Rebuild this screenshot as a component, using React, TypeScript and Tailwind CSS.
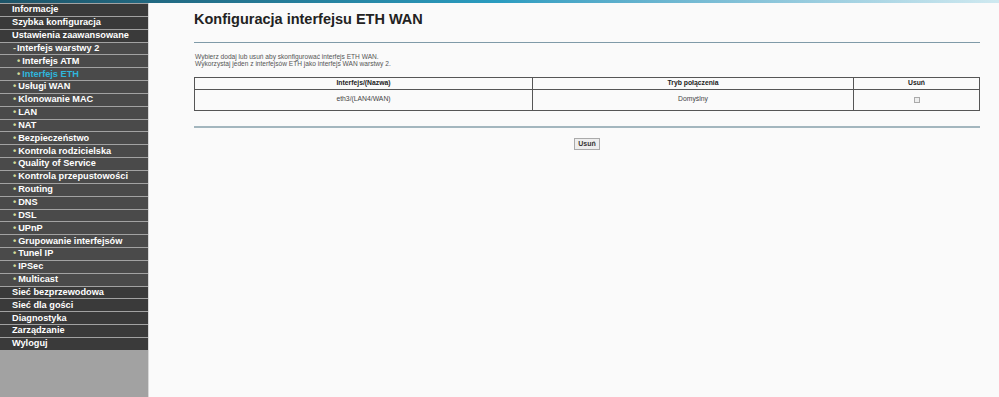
import React from 'react'

type Item = { label: string; level: 1 | 2 | 3; mark?: string; active?: boolean }

const menu: Item[] = [
  { label: 'Informacje', level: 1 },
  { label: 'Szybka konfiguracja', level: 1 },
  { label: 'Ustawienia zaawansowane', level: 1 },
  { label: 'Interfejs warstwy 2', level: 2, mark: '-' },
  { label: 'Interfejs ATM', level: 3 },
  { label: 'Interfejs ETH', level: 3, active: true },
  { label: 'Usługi WAN', level: 2 },
  { label: 'Klonowanie MAC', level: 2 },
  { label: 'LAN', level: 2 },
  { label: 'NAT', level: 2 },
  { label: 'Bezpieczeństwo', level: 2 },
  { label: 'Kontrola rodzicielska', level: 2 },
  { label: 'Quality of Service', level: 2 },
  { label: 'Kontrola przepustowości', level: 2 },
  { label: 'Routing', level: 2 },
  { label: 'DNS', level: 2 },
  { label: 'DSL', level: 2 },
  { label: 'UPnP', level: 2 },
  { label: 'Grupowanie interfejsów', level: 2 },
  { label: 'Tunel IP', level: 2 },
  { label: 'IPSec', level: 2 },
  { label: 'Multicast', level: 2 },
  { label: 'Sieć bezprzewodowa', level: 1 },
  { label: 'Sieć dla gości', level: 1 },
  { label: 'Diagnostyka', level: 1 },
  { label: 'Zarządzanie', level: 1 },
  { label: 'Wyloguj', level: 1 },
]

function MenuRow({ item }: { item: Item }) {
  const pad = item.level === 1 ? 'pl-[12px]' : item.level === 2 ? 'pl-[13px]' : 'pl-[17px]'
  const bg = item.level === 1 ? 'bg-[#3a3a3a]' : 'bg-[#4a4a4a]'
  return (
    <div
      className={`h-[11.85px] mb-px flex items-center ${pad} ${bg} text-[9.2px] font-bold leading-none whitespace-nowrap ${
        item.active ? 'text-[#2fb6dc]' : 'text-white'
      }`}
    >
      {item.level > 1 && (
        item.mark === '-'
          ? <span className="mr-[1px] text-[#dcdcb0]">-</span>
          : <span className="mr-[2px] text-[#d6dc9a]">•</span>
      )}
      {item.label}
    </div>
  )
}

export default function App() {
  return (
    <div className="min-h-screen flex flex-col bg-[#fafafa]" style={{ fontFamily: '"Liberation Sans", Arial, sans-serif' }}>
      <div className="h-[3px] bg-gradient-to-r from-[#1d5468] via-[#2a9cc0] to-[#cfe9f0]" />
      <div className="flex flex-1">
        <aside className="w-[149px] shrink-0 bg-[#a2a2a2] border-r border-[#d8d8d8] pt-px">
          {menu.map((m) => (
            <MenuRow key={m.label} item={m} />
          ))}
        </aside>

        <main className="flex-1 pl-[45px] pr-[19px]">
          <h1 className="pt-[9px] text-[14.5px] font-bold text-[#222] leading-none">Konfiguracja interfejsu ETH WAN</h1>
          <div className="mt-[15px] h-px bg-[#7f9aa8]" />

          <div className="mt-[10px] pl-px text-[6.6px] leading-[7.5px] text-[#555]">
            <p>Wybierz dodaj lub usuń aby skonfigurować interfejs ETH WAN.</p>
            <p>Wykorzystaj jeden z interfejsów ETH jako interfejs WAN warstwy 2.</p>
          </div>

          <table className="mt-[9px] w-full border-collapse text-[6.8px] text-[#222]">
            <thead>
              <tr className="h-[12px]">
                <th className="border border-[#555] font-bold text-[#222] w-[338px]">Interfejs/(Nazwa)</th>
                <th className="border border-[#555] font-bold text-[#222] w-[321px]">Tryb połączenia</th>
                <th className="border border-[#555] font-bold text-[#222]">Usuń</th>
              </tr>
            </thead>
            <tbody>
              <tr className="h-[21px]">
                <td className="border border-[#555] text-center text-[#444]">eth3/(LAN4/WAN)</td>
                <td className="border border-[#555] text-center text-[#444]">Domyślny</td>
                <td className="border border-[#555] text-center">
                  <span className="inline-block w-[6px] h-[6px] border border-[#aaa] bg-[#eee] align-middle" />
                </td>
              </tr>
            </tbody>
          </table>

          <div className="mt-[15px] h-[2px] bg-[#a3b6be]" />

          <div className="mt-[10px] flex justify-center">
            <button className="h-[12px] px-[3px] border border-[#aaa] bg-[#eeeeee] text-[7px] font-bold text-[#333] leading-none">
              Usuń
            </button>
          </div>
        </main>
      </div>
    </div>
  )
}
